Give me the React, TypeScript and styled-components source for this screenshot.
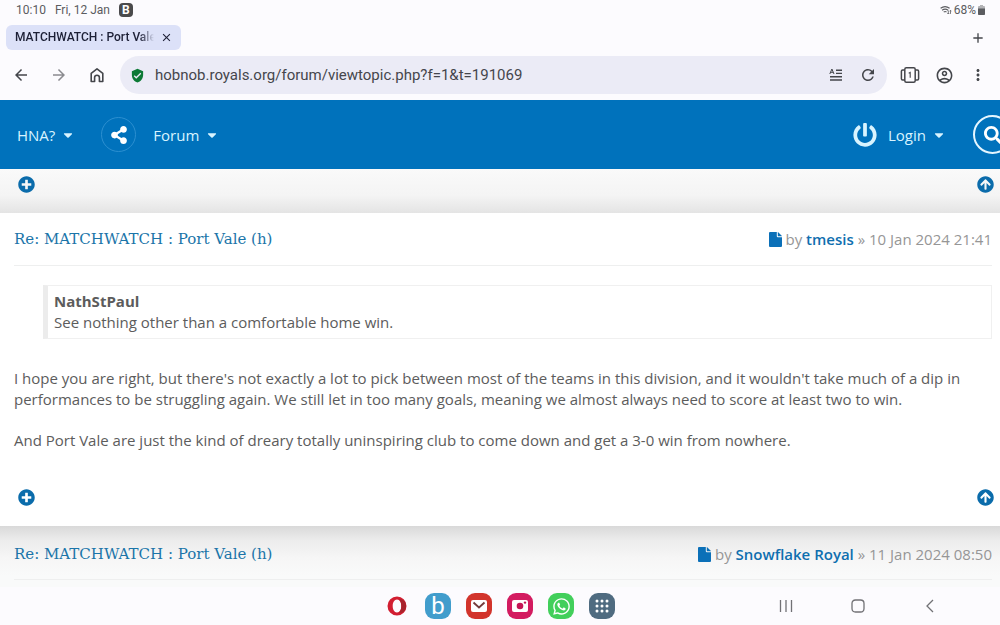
import React from "react";
import styled, { createGlobalStyle } from "styled-components";
import {
  MdAdd,
  MdArrowBack,
  MdArrowForward,
  MdClose,
  MdMoreVert,
  MdOutlineAccountCircle,
  MdRefresh,
  MdVerifiedUser,
} from "react-icons/md";
import {
  FaArrowCircleUp,
  FaCaretDown,
  FaPlusCircle,
  FaPowerOff,
  FaSearch,
  FaShareAlt,
  FaWhatsapp,
} from "react-icons/fa";

const GlobalStyle = createGlobalStyle`
  *, *::before, *::after { box-sizing: border-box; }
  body { margin: 0; background: #fdfcff; }
  button, input { font: inherit; color: inherit; }
  svg { display: block; flex: none; }
`;

const Screen = styled.div`
  display: flex;
  flex-direction: column;
  height: 100vh;
  overflow: hidden;
  background: #fcfbfe;
  color: #44464b;
  font-family: Roboto, sans-serif;
`;

const StatusBar = styled.div`
  display: flex;
  align-items: center;
  gap: 9px;
  height: 20px;
  flex: none;
  padding: 0 15px 0 16px;
  color: #5b5c60;
  font-size: 12px;
  line-height: 20px;
`;

const StatusRight = styled.div`
  display: flex;
  align-items: center;
  gap: 2px;
  margin-left: auto;
`;

const AppBadge = styled.span`
  display: grid;
  place-items: center;
  width: 14px;
  height: 14px;
  border-radius: 4px;
  background: #4a4a4c;
  color: #fff;
  font-size: 12px;
  font-weight: 700;
  line-height: 14px;
`;

const TabStrip = styled.div`
  display: flex;
  align-items: center;
  justify-content: space-between;
  flex: none;
  height: 32px;
  padding: 3px 14px 0 6px;
`;

const Tab = styled.div`
  display: flex;
  align-items: center;
  gap: 5px;
  width: 175px;
  height: 25px;
  padding: 0 8px 0 9px;
  border-radius: 6px;
  background: #dce1f8;
  color: #1d2036;
`;

const TabTitle = styled.span`
  flex: 1;
  overflow: hidden;
  white-space: nowrap;
  font-size: 12px;
  font-weight: 500;
  line-height: 25px;
  mask-image: linear-gradient(to right, #000 90%, transparent 100%);
`;

const IconButton = styled.button<{ $size?: number }>`
  display: grid;
  place-items: center;
  flex: none;
  width: ${(p) => p.$size ?? 22}px;
  height: ${(p) => p.$size ?? 22}px;
  padding: 0;
  border: 0;
  background: none;
  cursor: pointer;
`;

const Toolbar = styled.div`
  display: flex;
  align-items: center;
  gap: 12px;
  flex: none;
  height: 48px;
  padding: 0 11px 2px 10px;
`;

const NavButtons = styled.div`
  display: flex;
  gap: 16px;
`;

const AddressBar = styled.label`
  display: flex;
  align-items: center;
  gap: 10px;
  flex: 1;
  min-width: 0;
  height: 38px;
  padding: 0 8px 0 10px;
  border-radius: 19px;
  background: #ebebf6;
`;

const AddressInput = styled.input`
  flex: 1;
  min-width: 0;
  padding: 0;
  border: 0;
  outline: 0;
  background: none;
  color: #45464c;
  font-size: 15px;
  line-height: 20px;
`;

const Page = styled.div`
  flex: 1;
  min-height: 0;
  overflow: hidden;
  background: #f8f8f8;
  color: #5c5c5c;
  font-family: "Open Sans", sans-serif;
  font-size: 15px;
  line-height: 21px;
`;

const SiteHeader = styled.header`
  display: flex;
  align-items: center;
  height: 69px;
  overflow: hidden;
  padding-left: 17px;
  background: #0072bc;
  color: #d8f4ff;
`;

const MenuButton = styled.button`
  display: flex;
  align-items: center;
  gap: 6px;
  padding: 0;
  border: 0;
  background: none;
  font-size: 15px;
  line-height: 20px;
  cursor: pointer;
`;

const RoundButton = styled.button<{ $strong?: boolean }>`
  display: grid;
  place-items: center;
  flex: none;
  width: ${(p) => (p.$strong ? 39 : 35)}px;
  height: ${(p) => (p.$strong ? 39 : 35)}px;
  margin: ${(p) => (p.$strong ? "0 -12px 0 27px" : "0 17px 0 26px")};
  padding: 0;
  border: ${(p) => (p.$strong ? "2px solid #e4f6ff" : "1px solid #2c8fd0")};
  border-radius: 50%;
  background: none;
  color: #fff;
  cursor: pointer;
`;

const LoginGroup = styled.div`
  display: flex;
  align-items: center;
  gap: 11px;
  margin-left: auto;
`;

const PostActions = styled.div`
  display: flex;
  justify-content: space-between;
  padding: 0 6px 0 17px;
  color: #0b6cab;
`;

const PreviousPost = styled.div`
  height: 44px;
  padding-top: 6px;
  background: linear-gradient(#fafafa, #f4f4f4 60%, #e4e4e4);
`;

const Post = styled.article<{ $shaded?: boolean }>`
  padding: 0 8px 0 14px;
  min-height: ${(p) => (p.$shaded ? "62px" : "313px")};
  background: ${(p) =>
    p.$shaded ? "linear-gradient(#d9d9d9, #ececec 14px, #f6f6f6 32px, #f9fafa 50px)" : "#fff"};
`;

const PostHeader = styled.header<{ $next?: boolean }>`
  display: flex;
  align-items: center;
  justify-content: space-between;
  height: ${(p) => (p.$next ? 54 : 53)}px;
  padding-top: ${(p) => (p.$next ? 3 : 1)}px;
  border-bottom: 1px solid #eeefef;
`;

const PostTitle = styled.h3`
  margin: 0;
  font-family: "DejaVu Serif", serif;
  font-size: 15px;
  font-weight: 400;
  line-height: 21px;
  a { color: #1b75a9; text-decoration: none; }
`;

const Byline = styled.p`
  display: flex;
  align-items: center;
  gap: 4px;
  margin: 0;
  color: #969696;
  a { color: #0f6faf; font-weight: 600; text-decoration: none; }
  svg { color: #0b70b8; }
`;

const Quote = styled.blockquote`
  margin: 19px 0 29px 29px;
  padding: 5px 6px;
  border: 1px solid #f0f0f0;
  border-left: 5px solid #ececec;
  cite { display: block; font-style: normal; font-weight: 700; }
`;

const Paragraph = styled.p`
  margin: 0 0 20px;
`;

const PostFooter = styled.div`
  margin: 37px -8px 0 -14px;
`;

const SystemBar = styled.nav`
  display: flex;
  align-items: center;
  justify-content: flex-end;
  flex: none;
  height: 38px;
  padding-right: 59px;
  background: #fcfbfe;
`;

const Dock = styled.div`
  display: flex;
  gap: 15px;
  margin-right: 160px;
`;

const AppIcon = styled.button<{ $color?: string }>`
  display: grid;
  place-items: center;
  width: 26px;
  height: 26px;
  padding: 0;
  border: 0;
  border-radius: 9px;
  background: ${(p) => p.$color ?? "none"};
  color: #fff;
  font-size: 24px;
  line-height: 26px;
  cursor: pointer;
`;

const SystemButtons = styled.div`
  display: flex;
  gap: 50px;
`;

const HomeIcon = () => (
  <svg width="18" height="18" viewBox="0 0 18 18" fill="none" stroke="currentColor" strokeWidth="1.6" strokeLinejoin="round">
    <path d="M3.2 7.3 9 2.8l5.8 4.5v8.2h-3.4v-3.9a2.4 2.4 0 0 0-4.8 0v3.9H3.2Z" />
  </svg>
);

const ReaderIcon = () => (
  <svg width="14" height="14" viewBox="0 0 14 14" fill="none" stroke="currentColor" strokeWidth="1.4">
    <path d="M7 2.2h6M7 5.4h6M1 8.8h12M1 12h12" />
    <path d="m.8 6 2.1-5L5 6M1.6 4.3h2.6" strokeWidth="1" />
  </svg>
);

const TabsIcon = () => (
  <svg width="20" height="18" viewBox="0 0 20 18" fill="none" stroke="currentColor" strokeWidth="1.5">
    <rect x="4.8" y="1.8" width="10.4" height="14.4" rx="1.5" />
    <path d="M4.5 4H2.6Q1.4 4 1.4 5.2v7.6q0 1.2 1.2 1.2h1.9M15.5 4h1.9q1.2 0 1.2 1.2v7.6q0 1.2-1.2 1.2h-1.9" />
    <path d="m8.7 7.2 1.5-.8v5.4" strokeWidth="1.1" />
  </svg>
);

const WifiIcon = () => (
  <svg width="12" height="10" viewBox="0 0 12 10" fill="none" stroke="currentColor" strokeWidth="1.1">
    <path d="M.6 3.3Q5 0 9.6 3.3M2.1 5.2q3-2.2 6 0M3.7 7q1.5-1 2.8 0" />
    <path d="M8.3 5.4v3.5M10.5 5.4v3.5M7.3 8l1 1 1-1M9.5 6.3l1-1 1 1" strokeWidth=".8" />
  </svg>
);

const BatteryIcon = () => (
  <svg width="7" height="10" viewBox="0 0 7 10" fill="currentColor">
    <path d="M2 0h3v1h1q1 0 1 1v7q0 1-1 1H1q-1 0-1-1V2q0-1 1-1h1Z" opacity=".45" />
    <path d="M0 3.5h7V9q0 1-1 1H1q-1 0-1-1Z" />
  </svg>
);

const FileIcon = () => (
  <svg width="13" height="15" viewBox="0 0 13 15" fill="currentColor">
    <path d="M1 0h6.800v4.200q0 1 1 1H13V14q0 1-1 1H1q-1 0-1-1V1q0-1 1-1Z" />
    <path d="M8.800.1q.4.1.7.4l3 3q.3.300.4.700H8.800Z" />
  </svg>
);

const OperaIcon = () => (
  <svg width="20" height="20" viewBox="0 0 20 20">
    <path fillRule="evenodd" fill="#d21e31" d="M10 .5a9.5 9.5 0 1 1 0 19 9.5 9.5 0 0 1 0-19Zm0 3c-2.7 0-4.3 3-4.3 6.5s1.6 6.5 4.3 6.5 4.3-3 4.3-6.5-1.6-6.5-4.3-6.5Z" />
    <path fill="#a8232c" d="M12 3.400c1.500 1 2.300 3.600 2.300 6.600s-.8 5.600-2.300 6.600c2.100.8 4.600-.3 5.800-2.100 1.800-2.800 1.800-6.200 0-9-1.200-1.800-3.700-2.900-5.800-2.100Z" />
  </svg>
);

const MailIcon = () => (
  <svg width="18" height="14" viewBox="0 0 18 14">
    <rect x="1" y="1" width="16" height="12" rx="2" fill="#fff" />
    <path d="m3.500 3.500 5.500 5 5.500-5" fill="none" stroke="#743b3b" strokeWidth="1.8" />
  </svg>
);

const CameraIcon = () => (
  <svg width="18" height="14" viewBox="0 0 18 14">
    <rect x="1" y="1" width="16" height="12" rx="2" fill="#fff" />
    <circle cx="9" cy="7" r="3.3" fill="#c41655" />
    <circle cx="14" cy="3.6" r="1.2" fill="#c41655" />
  </svg>
);

const AppsIcon = () => (
  <svg width="14" height="14" viewBox="0 0 14 14" fill="currentColor">
    {[2, 7, 12].flatMap((y) => [2, 7, 12].map((x) => <circle key={`${x}-${y}`} cx={x} cy={y} r="1.5" />))}
  </svg>
);

const SystemIcon = ({ d }: { d: string }) => (
  <svg width="16" height="16" viewBox="0 0 16 16" fill="none" stroke="#717175" strokeWidth="1.3">
    <path d={d} />
  </svg>
);

const Actions = () => (
  <PostActions>
    <IconButton $size={18} aria-label="Expand post"><FaPlusCircle size={17} /></IconButton>
    <IconButton $size={18} aria-label="Back to top"><FaArrowCircleUp size={17} /></IconButton>
  </PostActions>
);

const PostHead = ({ author, date, next }: { author: string; date: string; next?: boolean }) => (
  <PostHeader $next={next}>
    <PostTitle><a href="#post">Re: MATCHWATCH : Port Vale (h)</a></PostTitle>
    <Byline>
      <FileIcon />
      <span>by <a href="#author">{author}</a> » {date}</span>
    </Byline>
  </PostHeader>
);

export default function App() {
  return (
    <Screen>
      <GlobalStyle />
      <StatusBar>
        <span>10:10</span>
        <span>Fri, 12 Jan</span>
        <AppBadge>B</AppBadge>
        <StatusRight><WifiIcon /><span>68%</span><BatteryIcon /></StatusRight>
      </StatusBar>
      <TabStrip>
        <Tab>
          <TabTitle>MATCHWATCH : Port Vale (h)</TabTitle>
          <IconButton $size={14} aria-label="Close tab"><MdClose size={13} /></IconButton>
        </Tab>
        <IconButton $size={16} aria-label="New tab"><MdAdd size={16} /></IconButton>
      </TabStrip>
      <Toolbar>
        <NavButtons>
          <IconButton aria-label="Back"><MdArrowBack size={18} /></IconButton>
          <IconButton aria-label="Forward"><MdArrowForward size={18} color="#8b8b90" /></IconButton>
          <IconButton aria-label="Home"><HomeIcon /></IconButton>
        </NavButtons>
        <AddressBar>
          <MdVerifiedUser size={15} color="#0c7a35" />
          <AddressInput aria-label="Address" defaultValue="hobnob.royals.org/forum/viewtopic.php?f=1&t=191069" />
          <IconButton aria-label="Reading mode"><ReaderIcon /></IconButton>
          <IconButton aria-label="Reload"><MdRefresh size={18} /></IconButton>
        </AddressBar>
        <IconButton aria-label="Open tabs"><TabsIcon /></IconButton>
        <IconButton aria-label="Account"><MdOutlineAccountCircle size={19} /></IconButton>
        <IconButton aria-label="More"><MdMoreVert size={18} /></IconButton>
      </Toolbar>
      <Page>
        <SiteHeader>
          <MenuButton>HNA? <FaCaretDown size={14} /></MenuButton>
          <RoundButton aria-label="Share"><FaShareAlt size={18} /></RoundButton>
          <MenuButton>Forum <FaCaretDown size={14} /></MenuButton>
          <LoginGroup>
            <FaPowerOff size={24} />
            <MenuButton>Login <FaCaretDown size={14} /></MenuButton>
          </LoginGroup>
          <RoundButton $strong aria-label="Search"><FaSearch size={18} /></RoundButton>
        </SiteHeader>
        <PreviousPost><Actions /></PreviousPost>
        <Post>
          <PostHead author="tmesis" date="10 Jan 2024 21:41" />
          <Quote>
            <cite>NathStPaul</cite>
            See nothing other than a comfortable home win.
          </Quote>
          <Paragraph>
            I hope you are right, but there's not exactly a lot to pick between most of the teams in this division, and it
            wouldn't take much of a dip in performances to be struggling again. We still let in too many goals, meaning we
            almost always need to score at least two to win.
          </Paragraph>
          <Paragraph>
            And Port Vale are just the kind of dreary totally uninspiring club to come down and get a 3-0 win from nowhere.
          </Paragraph>
          <PostFooter><Actions /></PostFooter>
        </Post>
        <Post $shaded>
          <PostHead author="Snowflake Royal" date="11 Jan 2024 08:50" next />
        </Post>
      </Page>
      <SystemBar>
        <Dock>
          <AppIcon aria-label="Opera"><OperaIcon /></AppIcon>
          <AppIcon $color="#419dcc">b</AppIcon>
          <AppIcon $color="#d2342c" aria-label="Mail"><MailIcon /></AppIcon>
          <AppIcon $color="#d31b60" aria-label="Camera"><CameraIcon /></AppIcon>
          <AppIcon $color="#42cf5b" aria-label="WhatsApp"><FaWhatsapp size={19} /></AppIcon>
          <AppIcon $color="#4f6b80" aria-label="All apps"><AppsIcon /></AppIcon>
        </Dock>
        <SystemButtons>
          <IconButton aria-label="Recent apps"><SystemIcon d="M2.5 2v12M8 2v12M13.5 2v12" /></IconButton>
          <IconButton aria-label="Home screen"><SystemIcon d="M5.5 2h5Q14 2 14 5.5v5q0 3.500-3.500 3.500h-5Q2 14 2 10.500v-5Q2 2 5.500 2Z" /></IconButton>
          <IconButton aria-label="Go back"><SystemIcon d="M11 2 5 8l6 6" /></IconButton>
        </SystemButtons>
      </SystemBar>
    </Screen>
  );
}
